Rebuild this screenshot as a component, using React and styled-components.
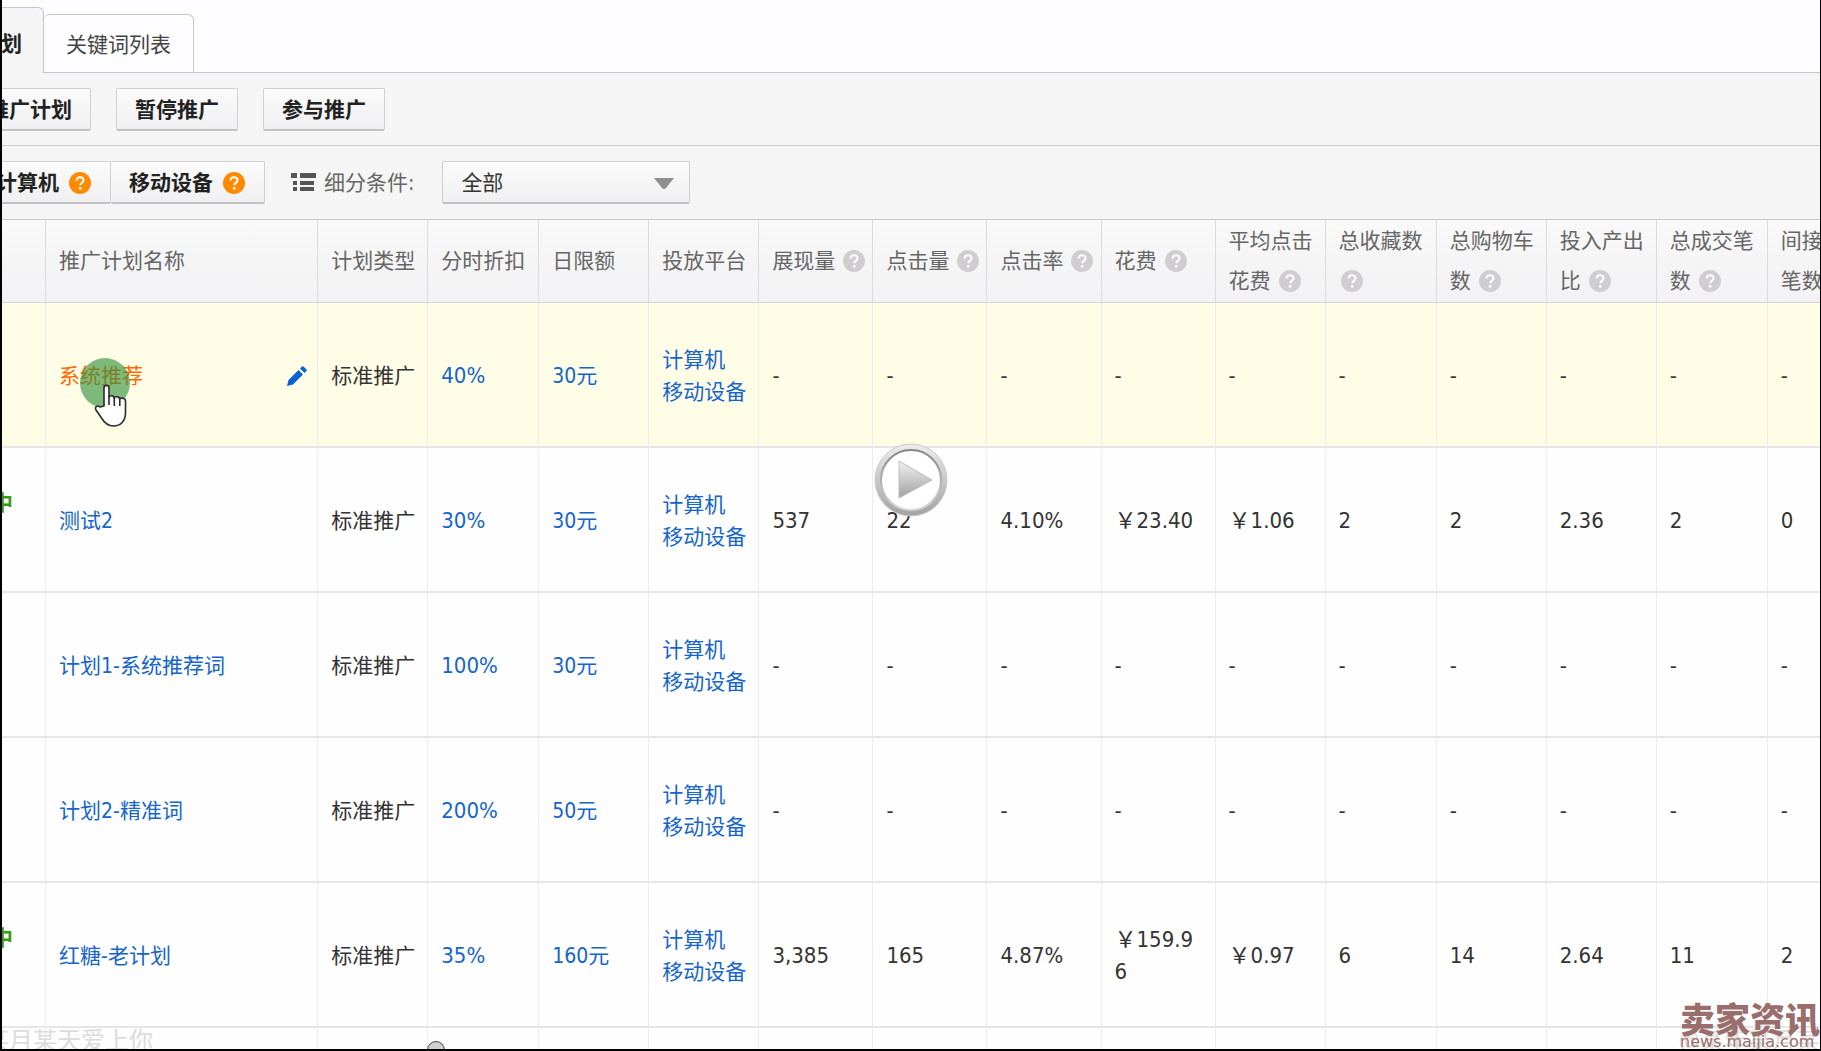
// App.jsx
import styled, { createGlobalStyle } from 'styled-components';

const columns = [
  { key: 'status', label: '', width: 130 },
  { key: 'name', label: '推广计划名称', width: 272 },
  { key: 'type', label: '计划类型', width: 110 },
  { key: 'discount', label: '分时折扣', width: 111 },
  { key: 'limit', label: '日限额', width: 110 },
  { key: 'platform', label: '投放平台', width: 110 },
  { key: 'views', label: '展现量', width: 114, help: true },
  { key: 'clicks', label: '点击量', width: 114, help: true },
  { key: 'ctr', label: '点击率', width: 114, help: true },
  { key: 'cost', label: '花费', width: 114, help: true },
  { key: 'cpc', label: '平均点击花费', width: 110, help: true },
  { key: 'favorites', label: '总收藏数', width: 111, help: true },
  { key: 'carts', label: '总购物车数', width: 110, help: true },
  { key: 'roi', label: '投入产出比', width: 110, help: true },
  { key: 'orders', label: '总成交笔数', width: 111, help: true },
  { key: 'indirect', label: '间接成交笔数', width: 110, help: true },
];

const empty = Array(10).fill('-');

const plans = [
  { name: '系统推荐', discount: '40%', limit: '30元', metrics: empty, hovered: true },
  {
    name: '测试2',
    status: '推广中',
    discount: '30%',
    limit: '30元',
    metrics: ['537', '22', '4.10%', '￥23.40', '￥1.06', '2', '2', '2.36', '2', '0'],
  },
  { name: '计划1-系统推荐词', discount: '100%', limit: '30元', metrics: empty },
  { name: '计划2-精准词', discount: '200%', limit: '50元', metrics: empty },
  {
    name: '红糖-老计划',
    status: '推广中',
    discount: '35%',
    limit: '160元',
    metrics: ['3,385', '165', '4.87%', '￥159.96', '￥0.97', '6', '14', '2.64', '11', '2'],
  },
];

function HelpIcon({ color }) {
  return (
    <HelpSvg viewBox="0 0 22 22" aria-hidden="true">
      <circle cx="11" cy="11" r="11" fill={color} />
      <path
        d="M7.6 8.6C7.6 6.4 9 5.2 11 5.2s3.5 1.2 3.5 3.1c0 2.6-3.2 2.6-3.2 5"
        fill="none"
        stroke="#fff"
        strokeWidth="2"
      />
      <circle cx="11.2" cy="16.4" r="1.4" fill="#fff" />
    </HelpSvg>
  );
}

function ListIcon() {
  return (
    <svg width="25" height="19" viewBox="0 0 25 19" fill="#555" aria-hidden="true">
      <path d="M0 0h6v5H0zM9 0h16v5H9zM2 8h4v4H2zM9 8h14v4H9zM2 14h4v4H2zM9 14h14v4H9z" />
    </svg>
  );
}

function PencilIcon() {
  return (
    <svg width="20" height="20" viewBox="0 0 20 20" fill="#0b62d6" aria-hidden="true">
      <path d="M0 20l1.5-6L11.500 4l4.500 4.500L6 18.500zM13 2.500L15 .6q.8-.8 1.600 0l2.800 2.800q.8.8 0 1.600L17.500 7z" />
    </svg>
  );
}

function Pointer() {
  return (
    <PointerSvg viewBox="0 0 52 70" aria-hidden="true">
      <circle cx="25" cy="25" r="25" fill="#2f8f3a" fillOpacity="0.62" />
      <path
        d="M24 48V30c0-3.500 5-3.500 5 0v9c1-2 5-1.500 5 1 1-2 5.500-1.500 5.500 1 1.500-1.500 6-1 6 2v12c0 8-5 13-12 13-6 0-9-3-12-8l-5.500-8c-2-3.500 2-5 4-3z"
        fill="#fff"
        stroke="#2b2b2b"
        strokeWidth="1.600"
        strokeLinejoin="round"
      />
      <path d="M29 38v9M34.300 40v8M39.800 41v7" stroke="#2b2b2b" strokeWidth="1.600" fill="none" />
    </PointerSvg>
  );
}

function PlayIcon() {
  return (
    <svg width="74" height="74" viewBox="0 0 74 74" aria-hidden="true">
      <defs>
        <linearGradient id="ring" x1="0" y1="0" x2="0" y2="1">
          <stop offset="0" stopColor="#ededed" />
          <stop offset="1" stopColor="#a2a2a2" />
        </linearGradient>
        <linearGradient id="rim" x1="0" y1="0" x2="0" y2="1">
          <stop offset="0" stopColor="#858585" />
          <stop offset="1" stopColor="#d8d8d8" />
        </linearGradient>
        <linearGradient id="arrow" x1="0" y1="0" x2="0" y2="1">
          <stop offset="0" stopColor="#f2f2f2" />
          <stop offset="1" stopColor="#a0a0a0" />
        </linearGradient>
      </defs>
      <circle cx="37" cy="37" r="36" fill="url(#ring)" stroke="#c9c9c9" />
      <circle cx="37" cy="37" r="30" fill="#fff" stroke="url(#rim)" strokeWidth="2" />
      <path d="M25 18v37l33-18z" fill="url(#arrow)" stroke="#bdbdbd" strokeWidth="1" />
    </svg>
  );
}

export default function App() {
  return (
    <>
      <GlobalStyle />
      <Frame>
        <Shell>
          <TabBar>
            <Tab href="#plans" $active>推广计划</Tab>
            <Tab href="#keywords">关键词列表</Tab>
          </TabBar>
          <ActionBar>
            <Button>推广计划</Button>
            <Button>暂停推广</Button>
            <Button>参与推广</Button>
          </ActionBar>
          <FilterBar>
            <Segments>
              <Segment>计算机 <HelpIcon color="#ff8a00" /></Segment>
              <Segment>移动设备 <HelpIcon color="#ff8a00" /></Segment>
            </Segments>
            <FilterLabel htmlFor="segment">
              <ListIcon />
              细分条件:
            </FilterLabel>
            <SelectBox>
              <Select id="segment" defaultValue="all">
                <option value="all">全部</option>
              </Select>
              <Caret viewBox="0 0 20 12" aria-hidden="true">
                <path d="M0 0h20L12 10q-2 2-4 0z" fill="#8e8e8e" />
              </Caret>
            </SelectBox>
          </FilterBar>
          <Table>
            <colgroup>
              {columns.map((col) => <Col key={col.key} $width={col.width} />)}
            </colgroup>
            <thead>
              <tr>
                {columns.map((col) => (
                  <HeadCell key={col.key}>
                    {col.label}
                    {col.help && <> <HelpIcon color="#cfcdd0" /></>}
                  </HeadCell>
                ))}
              </tr>
            </thead>
            <tbody>
              {plans.map((plan) => (
                <Row key={plan.name} $hovered={plan.hovered}>
                  <StatusCell>{plan.status}</StatusCell>
                  <Cell>
                    <NameLine>
                      <PlanLink href="#plan" $hovered={plan.hovered}>{plan.name}</PlanLink>
                      {plan.hovered && (
                        <>
                          <EditButton aria-label="编辑"><PencilIcon /></EditButton>
                          <Pointer />
                        </>
                      )}
                    </NameLine>
                  </Cell>
                  <Cell>标准推广</Cell>
                  <MetricCell><PlanLink href="#discount">{plan.discount}</PlanLink></MetricCell>
                  <Cell><PlanLink href="#limit">{plan.limit}</PlanLink></Cell>
                  <Cell>
                    <PlatformLink href="#pc">计算机</PlatformLink>
                    <PlatformLink href="#mobile">移动设备</PlatformLink>
                  </Cell>
                  {plan.metrics.map((value, i) => <MetricCell key={i}>{value}</MetricCell>)}
                </Row>
              ))}
              <Row>
                {columns.map((col) => <Cell key={col.key} />)}
              </Row>
            </tbody>
          </Table>
        </Shell>
        <PlayButton aria-label="播放"><PlayIcon /></PlayButton>
        <LeftMark>某月某天爱上你</LeftMark>
        <RightMark>@某年某月某</RightMark>
        <Brand>
          <BrandName>卖家资讯</BrandName>
          <BrandSite>news.maijia.com</BrandSite>
        </Brand>
        <Knob />
      </Frame>
    </>
  );
}

const GlobalStyle = createGlobalStyle`
  * {
    box-sizing: border-box;
  }

  body {
    margin: 0;
    overflow: hidden;
    background: #fdfdfd;
  }

  body, button, select {
    font-family: 'DejaVu Sans Condensed', 'Noto Sans CJK SC', sans-serif;
    font-size: 21px;
    line-height: 32px;
    color: #333;
  }
`;

const Frame = styled.div`
  position: relative;
  height: 100vh;
  overflow: hidden;
  border: solid #000;
  border-width: 0 1px 2px 2px;
`;

/* The page is scrolled sideways, so its left part is cut off */
const Shell = styled.main`
  margin-left: -86px;
`;

const TabBar = styled.nav`
  display: flex;
  align-items: flex-end;
  height: 73px;
  border-bottom: 1px solid #c6c6c8;
  background: #fdfcfe;
`;

const Tab = styled.a`
  height: ${(p) => (p.$active ? '66px' : '58px')};
  margin-bottom: ${(p) => (p.$active ? '-1px' : '0')};
  padding: ${(p) => (p.$active ? '20px 21px 0' : '14px 22px 0')};
  border: 1px solid #c6c6c8;
  border-bottom: 0;
  border-left-width: ${(p) => (p.$active ? '1px' : '0')};
  border-radius: 6px 6px 0 0;
  background: ${(p) => (p.$active ? '#f5f5f5' : '#fdfcfe')};
  color: ${(p) => (p.$active ? '#222' : '#444')};
  font-weight: ${(p) => (p.$active ? 'bold' : 'normal')};
  text-decoration: none;
`;

const ActionBar = styled.div`
  display: flex;
  gap: 25px;
  padding: 15px 0 14px 53px;
  border-bottom: 1px solid #cdcdcd;
  background: #f5f5f5;
`;

const Button = styled.button`
  height: 43px;
  padding: 1px 18px 0;
  border: 1px solid #d0d0d2;
  border-bottom: 2px solid #c2c2c4;
  border-radius: 2px;
  background: linear-gradient(#fbfbfb, #f0eff1);
  color: #222;
  font-weight: bold;
`;

const FilterBar = styled.div`
  display: flex;
  align-items: center;
  padding: 15px 0 15px 61px;
  background: #f5f5f5;
`;

const Segments = styled.div`
  display: flex;
`;

const Segment = styled(Button)`
  display: flex;
  align-items: center;
  gap: 10px;
  padding: 1px 19px 0 18px;

  & + & {
    border-left: 0;
  }
`;

const FilterLabel = styled.label`
  display: flex;
  align-items: center;
  gap: 8px;
  margin: 0 28px 0 26px;
  color: #666;
`;

const SelectBox = styled.div`
  position: relative;
  width: 248px;
`;

const Select = styled.select`
  display: block;
  width: 100%;
  height: 43px;
  padding: 1px 18px 0;
  appearance: none;
  border: 1px solid #d0d0d2;
  border-bottom: 2px solid #c2c2c4;
  border-radius: 2px;
  background: linear-gradient(#fbfbfb, #f0eff1);
`;

const Caret = styled.svg`
  position: absolute;
  top: 17px;
  right: 16px;
  width: 20px;
  height: 12px;
  pointer-events: none;
`;

const Table = styled.table`
  width: 100%;
  min-width: 1962px;
  table-layout: fixed;
  border-spacing: 0;
  background: #fefefe;
`;

const Col = styled.col`
  width: ${(p) => p.$width}px;
`;

const HeadCell = styled.th`
  height: 84px;
  padding: 0 4px 0 13px;
  border: solid #dcdcde;
  border-width: 1px 1px 1px 0;
  border-top-color: #c8c8c8;
  border-bottom-color: #d4d4d6;
  background: linear-gradient(#f9f9f9, #f2f1f3);
  color: #666;
  font-weight: normal;
  line-height: 40px;
  text-align: left;
  word-break: break-all;

  svg {
    margin-left: 2px;
  }
`;

const HelpSvg = styled.svg`
  flex: none;
  width: 22px;
  height: 22px;
  vertical-align: -4px;
`;

const Row = styled.tr`
  background: ${(p) => (p.$hovered ? '#fffde6' : '#fefefe')};
`;

const Cell = styled.td`
  height: 145px;
  padding: 2px 10px 0 13px;
  border-right: 1px solid #ededef;
  border-bottom: 2px solid #e6e6e8;
`;

const StatusCell = styled(Cell)`
  padding: 0 32px 34px 0;
  color: #3f9a0c;
  font-weight: bold;
  text-align: right;
`;

const MetricCell = styled(Cell)`
  padding-right: 15px;
  font-size: 22px;
  word-break: break-all;
`;

const NameLine = styled.div`
  position: relative;
  display: flex;
  align-items: center;
  justify-content: space-between;
`;

const PlanLink = styled.a`
  color: ${(p) => (p.$hovered ? '#ff6a00' : '#1565cc')};
  text-decoration: none;
`;

const PlatformLink = styled(PlanLink)`
  display: block;
`;

const EditButton = styled.button`
  display: flex;
  padding: 0;
  border: 0;
  background: none;
`;

const PointerSvg = styled.svg`
  position: absolute;
  top: -2px;
  left: 21px;
  width: 52px;
  height: 70px;
`;

const PlayButton = styled.button`
  position: absolute;
  top: 443px;
  left: 50%;
  display: flex;
  padding: 0;
  border: 0;
  background: none;
  transform: translateX(-50%);
`;

const LeftMark = styled.div`
  position: absolute;
  bottom: -8px;
  left: -17px;
  color: #dcdcdc;
  font-size: 24px;
  white-space: nowrap;
`;

const RightMark = styled(LeftMark)`
  right: 0;
  left: auto;
`;

const Brand = styled.div`
  position: absolute;
  right: 0;
  bottom: -1px;
  color: #9b6e6e;
`;

const BrandName = styled.div`
  font-family: 'Noto Sans CJK SC', sans-serif;
  font-size: 35px;
  font-weight: 900;
  line-height: 32px;
`;

const BrandSite = styled.div`
  font-family: 'DejaVu Sans', sans-serif;
  font-size: 16px;
  line-height: 16px;
`;

const Knob = styled.div`
  position: absolute;
  bottom: -10px;
  left: 425px;
  width: 18px;
  height: 18px;
  border: 1px solid #444;
  border-radius: 50%;
  background: #cfcfcf;
`;
